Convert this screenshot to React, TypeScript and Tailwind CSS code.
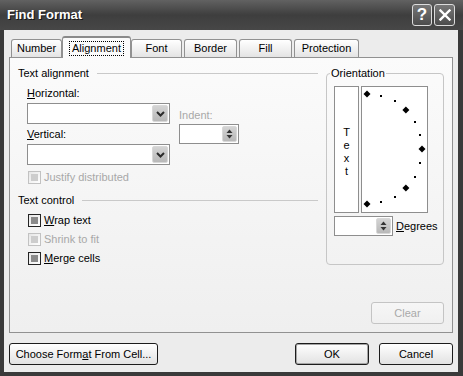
import React from 'react';

// Grayscale XP-style "Find Format" dialog

const Chevron = () => (
  <svg width="9" height="6" viewBox="0 0 9 6">
    <path d="M1 1 L4.5 4.5 L8 1" fill="none" stroke="#2a2a2a" strokeWidth="2" />
  </svg>
);

const Combo = ({ className = '' }: { className?: string }) => (
  <div className={`h-[21px] w-[143px] border border-[#8e8e8e] bg-white flex justify-end items-center pr-[1px] ${className}`}>
    <div className="w-[16px] h-[17px] rounded-[2px] border border-[#d8d8d8] bg-linear-to-b from-[#d4d4d4] to-[#b8b8b8] flex items-center justify-center">
      <Chevron />
    </div>
  </div>
);

const Spinner = ({ className = '' }: { className?: string }) => (
  <div className={`h-[20px] border border-[#8e8e8e] bg-white flex justify-end items-center pr-[1px] ${className}`}>
    <div className="w-[15px] h-[16px] rounded-[2px] border border-[#d8d8d8] bg-linear-to-b from-[#d4d4d4] to-[#b8b8b8] flex flex-col items-center justify-center gap-[2px]">
      <svg width="7" height="4" viewBox="0 0 7 4"><path d="M0.5 4 L3.5 0.5 L6.5 4 Z" fill="#333" /></svg>
      <svg width="7" height="4" viewBox="0 0 7 4"><path d="M0.5 0 L3.5 3.5 L6.5 0 Z" fill="#333" /></svg>
    </div>
  </div>
);

const Check = ({ label, accel, disabled = false }: { label: string; accel?: number; disabled?: boolean }) => (
  <div className="flex items-center h-[13px] ml-[1px]">
    <div
      className={`w-[13px] h-[13px] border flex items-center justify-center bg-linear-to-br from-[#e6e6e6] to-white ${
        disabled ? 'border-[#c2c2c2]' : 'border-[#232323]'
      }`}
    >
      <div className={`w-[7px] h-[7px] ${disabled ? 'bg-[#cdcdcd]' : 'bg-[#8a8a8a]'}`} />
    </div>
    <span className={`ml-[3px] ${disabled ? 'text-[#a8a8a8]' : 'text-black'}`}>
      {accel !== undefined ? (
        <>
          {label.slice(0, accel)}
          <u>{label[accel]}</u>
          {label.slice(accel + 1)}
        </>
      ) : (
        label
      )}
    </span>
  </div>
);

const GroupHeader = ({ label, className = '' }: { label: string; className?: string }) => (
  <div className={`flex items-center h-[13px] ${className}`}>
    <span>{label}</span>
    <div className="flex-1 h-px bg-[#c9c9c9] ml-[8px]" />
  </div>
);

const Button = ({ children, className = '', disabled = false, isDefault = false }: { children: React.ReactNode; className?: string; disabled?: boolean; isDefault?: boolean }) => (
  <div
    className={`h-[22px] rounded-[3px] border flex items-center justify-center bg-linear-to-b ${
      disabled
        ? 'border-[#c4c4c4] from-[#f6f6f6] to-[#f0f0f0] text-[#a9a9a9]'
        : 'border-[#1c1c1c] from-white to-[#e2e2e2] text-black'
    } ${isDefault ? 'shadow-[inset_0_0_0_1px_#a5a5a5]' : ''} ${className}`}
  >
    {children}
  </div>
);

const Tab = ({ label, className = '' }: { label: string; className?: string }) => (
  <div
    className={`h-[18px] rounded-t-[3px] border border-b-0 border-[#919191] bg-linear-to-b from-white to-[#e4e4e4] flex items-center justify-center ${className}`}
  >
    {label}
  </div>
);

const Dial = () => {
  const cx = 5;
  const cy = 62;
  const r = 55;
  const diamonds = [-90, -45, 0, 45, 90];
  const dots = [-75, -60, -30, -15, 15, 30, 60, 75];
  return (
    <svg width="65" height="125" viewBox="0 0 65 125">
      {diamonds.map((a) => {
        const x = cx + r * Math.cos((a * Math.PI) / 180);
        const y = cy + r * Math.sin((a * Math.PI) / 180);
        return (
          <polygon
            key={a}
            points={`${x},${y - 3.5} ${x + 3.5},${y} ${x},${y + 3.5} ${x - 3.5},${y}`}
            fill="#000"
          />
        );
      })}
      {dots.map((a) => {
        const x = cx + r * Math.cos((a * Math.PI) / 180);
        const y = cy + r * Math.sin((a * Math.PI) / 180);
        return <rect key={a} x={Math.round(x) - 1} y={Math.round(y) - 1} width="2" height="2" fill="#000" />;
      })}
    </svg>
  );
};

export default function App() {
  return (
    <div className="w-[463px] h-[376px] bg-[#3a3a3a] flex flex-col overflow-hidden font-['Liberation_Sans',Arial,sans-serif] text-[11px] leading-[13px] text-black">
      {/* title bar */}
      <div className="h-[30px] shrink-0 flex items-center pl-[7px] pr-[8px] bg-linear-to-b from-[#626262] via-[#3e3e3e] to-[#474747]">
        <span className="text-white font-bold text-[13px] leading-[16px] [text-shadow:1px_1px_0_#151515]">Find Format</span>
        <div className="ml-auto flex gap-[2px]">
          <div className="w-[20px] h-[22px] rounded-[3px] border border-[#dcdcdc] bg-linear-to-b from-[#777] to-[#4c4c4c] flex items-center justify-center text-white font-bold text-[17px] leading-[16px]">
            ?
          </div>
          <div className="w-[21px] h-[22px] rounded-[3px] border border-[#dcdcdc] bg-linear-to-b from-[#777] to-[#4c4c4c] flex items-center justify-center">
            <svg width="12" height="12" viewBox="0 0 12 12">
              <path d="M1.5 1.5 L10.5 10.5 M10.5 1.5 L1.5 10.5" stroke="#fff" strokeWidth="2.4" strokeLinecap="square" />
            </svg>
          </div>
        </div>
      </div>

      {/* client area */}
      <div className="flex-1 ml-[4px] mr-[5px] mb-[4px] bg-[#ececec] flex flex-col px-[5px] pt-[6px] pb-[7px]">
        {/* tabs */}
        <div className="h-[21px] flex items-end pl-[2px] relative z-10">
          <Tab label="Number" className="w-[51px]" />
          <div className="w-[69px] h-[22px] -mb-[1px] rounded-t-[3px] border border-b-0 border-[#919191] border-t-[2px] border-t-[#8a8a8a] bg-[#fbfbfb] flex items-center justify-center">
            <span className="border border-dotted border-black px-[2px] leading-[12px] pb-[1px]">Alignment</span>
          </div>
          <Tab label="Font" className="w-[51px]" />
          <Tab label="Border" className="w-[53px] ml-[2px]" />
          <Tab label="Fill" className="w-[53px] ml-[2px]" />
          <Tab label="Protection" className="w-[65px] ml-[2px]" />
        </div>

        {/* tab panel */}
        <div className="flex-1 border border-[#919191] bg-linear-to-b from-[#fbfbfb] to-[#efefef] flex flex-col pt-[9px] pl-[8px] pr-[8px] pb-[8px]">
          <div className="flex">
            {/* left column */}
            <div className="w-[300px] flex flex-col">
              <GroupHeader label="Text alignment" />
              <div className="flex pl-[9px]">
                <div className="w-[143px] flex flex-col">
                  <span className="mt-[7px]"><u>H</u>orizontal:</span>
                  <Combo className="mt-[3px]" />
                  <span className="mt-[4px]"><u>V</u>ertical:</span>
                  <Combo className="mt-[3px]" />
                </div>
                <div className="ml-[9px] flex flex-col">
                  <span className="mt-[29px] text-[#a8a8a8]">Indent:</span>
                  <Spinner className="mt-[2px] w-[60px]" />
                </div>
              </div>
              <div className="pl-[9px] mt-[6px]">
                <Check label="Justify distributed" disabled />
              </div>
              <GroupHeader label="Text control" className="mt-[10px]" />
              <div className="pl-[9px] flex flex-col">
                <div className="mt-[7px]"><Check label="Wrap text" accel={0} /></div>
                <div className="mt-[6px]"><Check label="Shrink to fit" disabled /></div>
                <div className="mt-[6px]"><Check label="Merge cells" accel={0} /></div>
              </div>
            </div>

            {/* orientation */}
            <fieldset className="ml-[8px] w-[118px] border border-[#c6c6c6] rounded-[4px] pl-[7px] pt-[6px] pb-[6px]">
              <legend className="-ml-[4px] px-[1px]">Orientation</legend>
              <div className="flex gap-[2px]">
                <div className="w-[25px] h-[127px] border border-[#8e8e8e] bg-white flex flex-col items-center justify-center pt-[5px]">
                  <span>T</span>
                  <span>e</span>
                  <span>x</span>
                  <span>t</span>
                </div>
                <div className="w-[67px] h-[127px] border border-[#8e8e8e] bg-white">
                  <Dial />
                </div>
              </div>
              <div className="flex items-center mt-[3px]">
                <Spinner className="w-[59px]" />
                <span className="ml-[3px]"><u>D</u>egrees</span>
              </div>
            </fieldset>
          </div>

          <Button disabled className="w-[73px] mt-auto self-end">Clear</Button>
        </div>

        {/* bottom buttons */}
        <div className="flex mt-[10px]">
          <Button className="w-[149px]">
            <span>
              Choose Form<u>a</u>t From Cell...
            </span>
          </Button>
          <Button isDefault className="w-[74px] ml-auto">OK</Button>
          <Button className="w-[74px] ml-[10px]">Cancel</Button>
        </div>
      </div>
    </div>
  );
}
